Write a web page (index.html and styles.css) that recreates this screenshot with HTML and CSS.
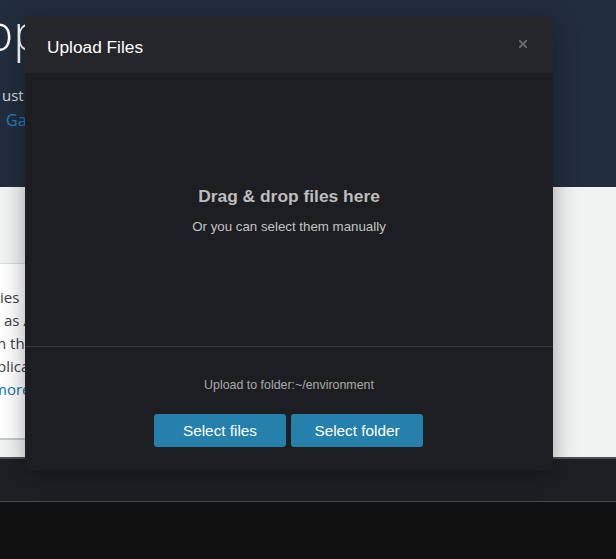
FILE: index.html
```html
<!DOCTYPE html>
<html lang="en">
<head>
<meta charset="utf-8">
<title>Upload Files</title>
<link rel="stylesheet" href="styles.css">
</head>
<body>
<div class="page">
  <header class="hero">
    <div class="hero-title">op</div>
    <div class="hero-text">ust the cloud IDE</div>
    <div class="hero-link">Gateway</div>
  </header>
  <main class="content">
    <section class="card">
      <div class="card-line">ies</div>
      <div class="card-line shift">as AWS Lambda</div>
      <div class="card-line cut">n the cloud</div>
      <div class="card-line cut">plications</div>
      <div class="card-line more link">more</div>
    </section>
  </main>
  <div class="panel-bar"></div>
  <div class="terminal"></div>
</div>

<div class="modal">
  <div class="modal-header">
    <h2 class="modal-title">Upload Files</h2>
    <span class="modal-close" aria-label="Close">
      <svg width="8" height="8" viewBox="0 0 8 8"><path d="M0.8 0.8 L7.2 7.2 M7.2 0.8 L0.8 7.2" stroke="#6e6f72" stroke-width="1.8" stroke-linecap="square"/></svg>
    </span>
  </div>
  <div class="modal-body">
    <div class="drop-title">Drag &amp; drop files here</div>
    <div class="drop-sub">Or you can select them manually</div>
  </div>
  <div class="modal-footer">
    <div class="upload-target">Upload to folder:~/environment</div>
    <div class="actions">
      <button class="btn">Select files</button>
      <button class="btn">Select folder</button>
    </div>
  </div>
</div>
</body>
</html>
```
FILE: styles.css
```css
html, body {
  margin: 0;
  padding: 0;
  width: 616px;
  height: 559px;
  overflow: hidden;
  background: #111111;
}

.page {
  width: 616px;
  height: 559px;
  display: flex;
  flex-direction: column;
  font-family: "Open Sans", "Liberation Sans", sans-serif;
  overflow: hidden;
}

.hero {
  height: 187px;
  flex: none;
  background: #222d3d;
  color: #ffffff;
  white-space: nowrap;
  overflow: hidden;
}

.hero-title {
  font-size: 50px;
  font-weight: 300;
  line-height: 50px;
  margin-top: 7px;
  margin-left: -16px;
}

.hero-text {
  font-size: 15px;
  line-height: 20px;
  margin-top: 28px;
  margin-left: 2px;
  color: #d5dbdb;
}

.hero-link {
  font-size: 16px;
  line-height: 22px;
  margin-top: 4px;
  margin-left: 6px;
  color: #1d81c4;
}

.content {
  height: 270px;
  flex: none;
  background: #f1f2f2;
  border-bottom: 2px solid #4d4f56;
  overflow: hidden;
}

.card {
  margin: 76px 0 0 -20px;
  width: 520px;
  height: 177px;
  box-sizing: border-box;
  background: #ffffff;
  border-top: 1px solid #dcdddd;
  border-bottom: 2px solid #c6c8ca;
  padding: 22px 0 0 20px;
  white-space: nowrap;
}

.card-line {
  font-size: 15px;
  line-height: 23px;
  color: #3b3f45;
}

.card-line.shift { margin-left: 4px; }
.card-line.cut { margin-left: -3px; }
.card-line.more { margin-left: -7px; }
.card-line.link { color: #0e74b8; }

.panel-bar {
  height: 42px;
  flex: none;
  background: #1e1f23;
  border-bottom: 1px solid #4a4b4f;
}

.terminal {
  flex: 1;
  background: #111111;
}

/* Modal overlay */
.modal {
  position: absolute;
  top: 17px;
  left: 25px;
  width: 528px;
  height: 453px;
  display: flex;
  flex-direction: column;
  background: #1d1e22;
  border-radius: 5px;
  overflow: hidden;
  box-shadow: 0 4px 24px rgba(0, 0, 0, 0.35);
  font-family: "Liberation Sans", Arial, sans-serif;
}

.modal-header {
  height: 56px;
  flex: none;
  box-sizing: border-box;
  padding: 4px 26px 0 22px;
  display: flex;
  align-items: center;
  background: #252629;
}

.modal-title {
  margin: 0;
  font-size: 17.3px;
  font-weight: normal;
  line-height: 20px;
  color: #ffffff;
}

.modal-close {
  margin-left: auto;
  width: 8px;
  height: 8px;
  display: flex;
  margin-top: -6px;
}

.modal-body {
  height: 273px;
  flex: none;
  display: flex;
  flex-direction: column;
  align-items: center;
  justify-content: center;
  padding-top: 2px;
  box-sizing: border-box;
}

.drop-title {
  font-size: 17.4px;
  font-weight: bold;
  line-height: 20px;
  color: #bdbdbd;
}

.drop-sub {
  margin-top: 13px;
  font-size: 13.3px;
  line-height: 16px;
  color: #c4c4c4;
}

.modal-footer {
  flex: 1;
  border-top: 1px solid #3a3b3e;
  display: flex;
  flex-direction: column;
  align-items: center;
  padding-top: 31px;
}

.upload-target {
  font-size: 12.4px;
  line-height: 14px;
  color: #a9a9a9;
}

.actions {
  margin-top: 22px;
  display: flex;
  gap: 5px;
  margin-left: -1px;
}

.btn {
  width: 132px;
  height: 33px;
  border: none;
  border-radius: 3px;
  background: #2580ab;
  color: #ffffff;
  font-family: "Liberation Sans", Arial, sans-serif;
  font-size: 15.3px;
  padding: 0;
}
```
